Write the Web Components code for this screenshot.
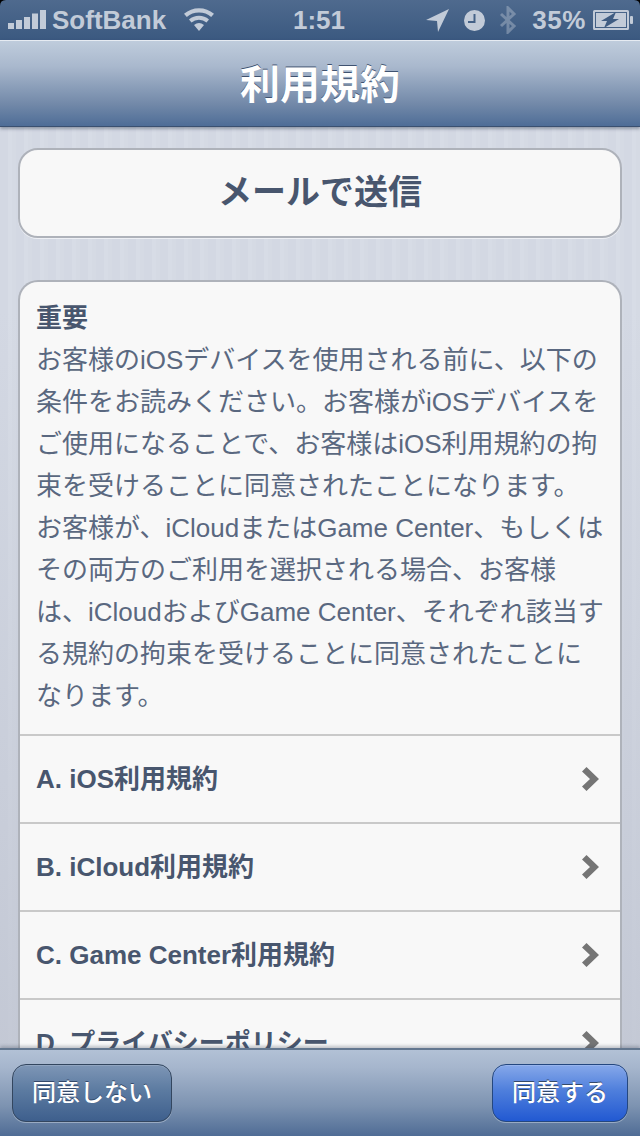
<!DOCTYPE html>
<html lang="ja">
<head>
<meta charset="utf-8">
<title>利用規約</title>
<style>
  html, body { margin: 0; height: 100%; }
  body {
    font-family: "Liberation Sans", "Noto Sans CJK JP", sans-serif;
    background: #d4d9e4;
  }
</style>
</head>
<body>
<terms-screen>
  <status-bar slot="status"></status-bar>
  <nav-bar slot="nav">利用規約</nav-bar>
  <mail-button>メールで送信</mail-button>
  <terms-card heading="重要">
    お客様のiOSデバイスを使用される前に、以下の<br>条件をお読みください。お客様がiOSデバイスを<br>ご使用になることで、お客様はiOS利用規約の拘<br>束を受けることに同意されたことになります。<br>お客様が、iCloudまたはGame Center、もしくは<br>その両方のご利用を選択される場合、お客様<br>は、iCloudおよびGame Center、それぞれ該当す<br>る規約の拘束を受けることに同意されたことに<br>なります。
    <terms-row slot="rows">A. iOS利用規約</terms-row>
    <terms-row slot="rows">B. iCloud利用規約</terms-row>
    <terms-row slot="rows">C. Game Center利用規約</terms-row>
    <terms-row slot="rows">D. プライバシーポリシー</terms-row>
  </terms-card>
  <tool-bar slot="footer">
    <bar-button>同意しない</bar-button>
    <bar-button primary>同意する</bar-button>
  </tool-bar>
</terms-screen>

<script>
// page frame: fixed bars, clipped scrolling content in between
class TermsScreen extends HTMLElement {
  constructor() {
    super();
    this.attachShadow({ mode: 'open' }).innerHTML = `
      <style>
        :host { display: flex; flex-direction: column; width: 640px; height: 1136px; overflow: hidden; position: relative; }
        .content {
          flex: 1; min-height: 0; overflow: hidden;
          display: flex; flex-direction: column; gap: 42px;
          padding: 21px 18px 0;
          background:
            linear-gradient(rgba(190,195,208,0) 20%, rgba(190,195,208,.75)),
            repeating-linear-gradient(90deg, #d3d8e3 0 8px, #d7dce6 8px 12px, #d5dae4 12px 16px);
        }
        .corner { position: absolute; width: 8px; height: 8px; background: #000; }
        .corner.tl { left: 0; top: 0; clip-path: path('M0 0H6Q0 0 0 6Z'); }
        .corner.tr { right: 0; top: 0; clip-path: path('M8 0H2Q8 0 8 6Z'); }
        .corner.bl { left: 0; bottom: 0; clip-path: path('M0 8H6Q0 8 0 2Z'); }
        .corner.br { right: 0; bottom: 0; clip-path: path('M8 8H2Q8 8 8 2Z'); }
      </style>
      <slot name="status"></slot>
      <slot name="nav"></slot>
      <div class="content"><slot></slot></div>
      <slot name="footer"></slot>
      <i class="corner tl"></i><i class="corner tr"></i><i class="corner bl"></i><i class="corner br"></i>
    `;
  }
}

class StatusBar extends HTMLElement {
  constructor() {
    super();
    this.attachShadow({ mode: 'open' }).innerHTML = `
      <style>
        :host {
          display: block; height: 40px; box-sizing: border-box; position: relative;
          background: linear-gradient(#4f6a8e, #3b5980);
          color: #c2cbd8; font: 700 26px/40px "Liberation Sans", sans-serif;
        }
        .row { display: flex; align-items: center; height: 40px; padding: 0 6px 0 8px; }
        .left, .right { flex: 1; display: flex; align-items: center; }
        .right { justify-content: flex-end; }
        svg { display: block; fill: currentColor; }
        .carrier { margin-left: 6px; }
        .wifi { margin-left: 17px; }
        .time { width: 84px; text-align: center; margin-left: -4px; }
        .pct { margin-left: 15px; letter-spacing: .6px; }
        .batt { margin-left: 7px; }
        .clock { margin-left: 14px; }
        .bt { margin-left: 14px; }
      </style>
      <div class="row">
        <div class="left">
          <svg width="38" height="20" viewBox="0 0 38 20"><rect x="0" y="13" width="6" height="6"/><rect x="8" y="10" width="6" height="9"/><rect x="16" y="7" width="6" height="12"/><rect x="24" y="3.500" width="6" height="15.500"/><rect x="32" y="0" width="6" height="19"/></svg>
          <span class="carrier">SoftBank</span>
          <svg class="wifi" width="32" height="24" viewBox="0 0 32 24"><path d="M16 23l-5-6a8 8 0 0 1 10 0zM8.500 14.500 6 11.500a15.500 15.500 0 0 1 20 0l-2.500 3a11.500 11.500 0 0 0-15 0zM3.800 9 1 5.800a23 23 0 0 1 30 0L28.200 9a19 19 0 0 0-24.400 0z"/></svg>
        </div>
        <span class="time">1:51</span>
        <div class="right">
          <svg width="24" height="24" viewBox="0 0 24 24"><path d="M0 12 23 1 12 24 11 13z"/></svg>
          <svg class="clock" width="21" height="21" viewBox="0 0 21 21"><path fill-rule="evenodd" d="M10.500 0a10.500 10.500 0 1 1 0 21 10.500 10.500 0 0 1 0-21zM9.500 4v7H4v2h7.500V4z"/></svg>
          <svg class="bt" width="18" height="28" viewBox="0 0 18 28" style="opacity:.4"><path fill="none" stroke="currentColor" stroke-width="3" d="M2 8l13 12-6 6V2l6 6L2 20"/></svg>
          <span class="pct">35%</span>
          <svg class="batt" width="41" height="20" viewBox="0 0 41 20"><path fill-rule="evenodd" d="M1.500 0h33A1.500 1.500 0 0 1 36 1.500v17a1.500 1.500 0 0 1-1.500 1.500h-33A1.500 1.500 0 0 1 0 18.500v-17A1.500 1.500 0 0 1 1.500 0zM2 2v16h32V2z"/><rect x="37" y="6" width="3" height="8" rx="1"/><rect x="3" y="3" width="30" height="14"/><path d="M23 2 8 11h6l-3 7 15-9h-6z" fill="#3f5c82"/></svg>
        </div>
      </div>
    `;
  }
}

class NavBar extends HTMLElement {
  constructor() {
    super();
    this.attachShadow({ mode: 'open' }).innerHTML = `
      <style>
        :host {
          display: block; height: 87px; box-sizing: border-box; flex: none; position: relative; z-index: 1;
          border-top: 1px solid #e6ebf2;
          border-bottom: 1px solid #3a5070;
          background: linear-gradient(#bfccdc, #a9b8cd 30%, #7188a8 75%, #4e6d97);
          box-shadow: 0 2px 3px rgba(60,70,90,.45);
          color: #fff; text-align: center;
          font: 700 40px/82px "Noto Sans CJK JP", sans-serif;
          text-shadow: 0 -1px 0 #3f5270;
        }
      </style>
      <slot></slot>
    `;
  }
}

class MailButton extends HTMLElement {
  constructor() {
    super();
    this.attachShadow({ mode: 'open' }).innerHTML = `
      <style>
        :host {
          display: block; flex: none; height: 90px; box-sizing: border-box;
          background: #f8f8f8; border: 2px solid #aeb2ba; border-radius: 20px;
          box-shadow: 0 1px 0 #eef0f5;
          color: #48566e; text-align: center;
          font: 700 34px/80px "Noto Sans CJK JP", sans-serif;
        }
      </style>
      <slot></slot>
    `;
  }
}

class TermsCard extends HTMLElement {
  constructor() {
    super();
    this.attachShadow({ mode: 'open' }).innerHTML = `
      <style>
        :host {
          display: block; flex: none; box-sizing: border-box;
          background: #f8f8f8; border: 2px solid #aeb2ba; border-bottom: 0; border-radius: 20px 20px 0 0;
        }
        .body {
          padding: 13px 16px 17px;
          color: #5a6880; font-size: 26px; line-height: 42px; white-space: nowrap;
          font-family: "Liberation Sans", "Noto Sans CJK JP", sans-serif;
        }
        h2 { margin: 0 0 2px; font: 700 26px/42px "Noto Sans CJK JP", sans-serif; color: #48566e; }
      </style>
      <div class="body">
        <h2></h2>
        <slot></slot>
      </div>
      <slot name="rows"></slot>
    `;
  }
  connectedCallback() {
    this.shadowRoot.querySelector('h2').textContent = this.getAttribute('heading');
  }
}

class TermsRow extends HTMLElement {
  constructor() {
    super();
    this.attachShadow({ mode: 'open' }).innerHTML = `
      <style>
        :host {
          display: flex; align-items: center; justify-content: space-between;
          height: 88px; box-sizing: border-box; padding: 0 21px 0 16px;
          border-top: 2px solid #c9c9c9;
          color: #48566e; font: 700 26px/1 "Liberation Sans", "Noto Sans CJK JP", sans-serif;
        }
        svg { display: block; }
      </style>
      <slot></slot>
      <svg width="18" height="26" viewBox="0 0 18 26"><path d="M1 5.500 5.500 1 18 13 5.500 25 1 20.500 9 13z" fill="#757575"/></svg>
    `;
  }
}

class ToolBar extends HTMLElement {
  constructor() {
    super();
    this.attachShadow({ mode: 'open' }).innerHTML = `
      <style>
        :host {
          display: flex; justify-content: space-between; align-items: flex-start; flex: none;
          height: 88px; box-sizing: border-box; padding: 14px 12px 0; position: relative; z-index: 1;
          border-top: 2px solid #63778f;
          background: linear-gradient(#b2c1d6, #a6b6cd 20%, #7d93b1 65%, #4f6c95);
          box-shadow: 0 -2px 3px rgba(60,70,90,.3);
        }
      </style>
      <slot></slot>
    `;
  }
}

class BarButton extends HTMLElement {
  constructor() {
    super();
    this.attachShadow({ mode: 'open' }).innerHTML = `
      <style>
        :host {
          display: block; height: 58px; box-sizing: border-box; padding: 0 19px;
          border: 1px solid #33465f; border-radius: 14px;
          background: linear-gradient(#7e96b6, #5c7ba1 45%, #3e5f8d);
          box-shadow: 0 1px 0 rgba(255,255,255,.35), inset 0 1px 0 rgba(255,255,255,.15);
          color: #fff; font: 500 24px/52px "Noto Sans CJK JP", sans-serif;
          text-shadow: 0 -1px 0 #34496a;
        }
        :host([primary]) {
          border-color: #24477f;
          background: linear-gradient(#86a8ea, #4f7fdc 45%, #2259d2);
        }
      </style>
      <slot></slot>
    `;
  }
}

customElements.define('terms-screen', TermsScreen);
customElements.define('status-bar', StatusBar);
customElements.define('nav-bar', NavBar);
customElements.define('mail-button', MailButton);
customElements.define('terms-card', TermsCard);
customElements.define('terms-row', TermsRow);
customElements.define('tool-bar', ToolBar);
customElements.define('bar-button', BarButton);
</script>
</body>
</html>
